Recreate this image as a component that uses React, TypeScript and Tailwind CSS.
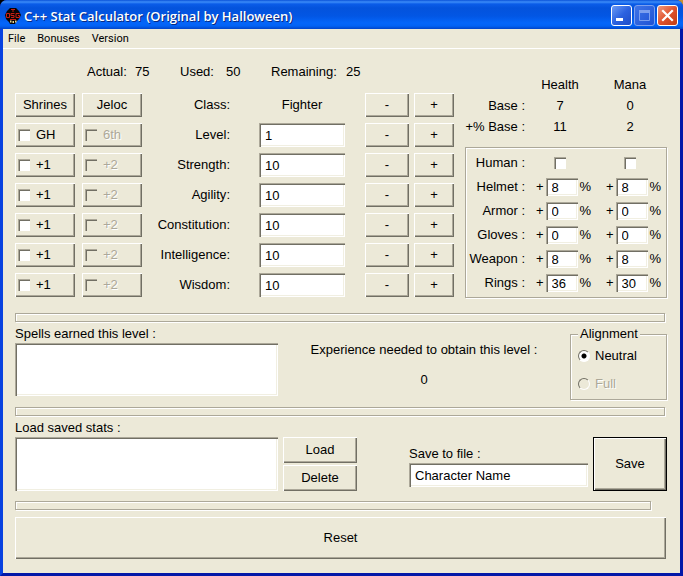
import type { ReactNode } from "react";

const raised =
  "bg-[#ece9d8] shadow-[inset_1px_1px_#ffffff,inset_-1px_-1px_#716f64,inset_-2px_-2px_#aca899]";
const sunken =
  "bg-white shadow-[inset_1px_1px_#aca899,inset_2px_2px_#716f64,inset_-1px_-1px_#ffffff,inset_-2px_-2px_#f1efe2]";
const tick =
  "size-3 shrink-0 appearance-none bg-white shadow-[inset_1px_1px_#aca899,inset_2px_2px_#716f64] checked:bg-[#716f64] disabled:bg-[#ece9d8]";
const etched = "border border-[#aca899] shadow-[1px_1px_#ffffff,inset_1px_1px_#ffffff]";

function PushButton({ children, label, className = "" }: { children: ReactNode; label?: string; className?: string }) {
  return (
    <button type="button" aria-label={label} className={`${raised} flex items-center justify-center ${className}`}>
      {children}
    </button>
  );
}

function TickButton({ text, disabled = false }: { text: string; disabled?: boolean }) {
  return (
    <label className={`${raised} flex h-6 w-[60px] items-center gap-1.5 pl-[3px]`}>
      <input type="checkbox" disabled={disabled} className={tick} />
      <span className={disabled ? "text-[#aca899] [text-shadow:1px_1px_#ffffff]" : ""}>{text}</span>
    </label>
  );
}

function Separator({ className = "mr-0.5" }: { className?: string }) {
  return <div role="separator" className={`${etched} h-[9px] ${className}`} />;
}

const stats = [
  { name: "Level", value: "1", first: "GH", second: "6th" },
  { name: "Strength", value: "10", first: "+1", second: "+2" },
  { name: "Agility", value: "10", first: "+1", second: "+2" },
  { name: "Constitution", value: "10", first: "+1", second: "+2" },
  { name: "Intelligence", value: "10", first: "+1", second: "+2" },
  { name: "Wisdom", value: "10", first: "+1", second: "+2" },
];

const gear = [
  { name: "Helmet", health: "8", mana: "8" },
  { name: "Armor", health: "0", mana: "0" },
  { name: "Gloves", health: "0", mana: "0" },
  { name: "Weapon", health: "8", mana: "8" },
  { name: "Rings", health: "36", mana: "30" },
];

function AppIcon() {
  return (
    <svg viewBox="0 0 16 16" className="size-4" aria-hidden="true">
      <path d="M5 0h6l3 3 2 4-2 4-3 3-1 2H5l-1-2-3-3-1-4 2-4z" fill="#0a0505" />
      <path
        d="M6 1.5h4M7 3h2M1.5 5.5h3M1.5 5.5v4h3v-4M6 5.5h3.5M6 5.5v2h3v2H6M11 5.5h3.5M11 5.5v4h3.5v-2h-1.500M5 11.500h6"
        fill="none"
        stroke="#c81e14"
        strokeWidth="1"
      />
      <path d="M5 12.500h1.500v2H5zM7.500 13H9v2H7.500zM10 12.500h1.500v2H10z" fill="#e8d890" />
    </svg>
  );
}

function TitleBar() {
  return (
    <header className="flex h-[29px] items-center gap-[3px] bg-[linear-gradient(#0a52d8_0,#3c8cf8_2px,#0a5ce8_4px,#0453dc_8px,#0256e4_16px,#0466fa_23px,#0262f4_26px,#0144c8_29px)] pt-0.5 pr-[5px] pl-[5px]">
      <AppIcon />
      <h1 className="flex-1 font-['Open_Sans',sans-serif] text-[13px] leading-4 font-semibold whitespace-nowrap text-white [text-shadow:1px_1px_#0a2a80]">
        C++ Stat Calculator (Original by Halloween)
      </h1>
      <div className="flex gap-0.5">
        <button
          type="button"
          aria-label="Minimize"
          className="size-[21px] rounded-[3px] border border-white bg-linear-to-br from-[#6c9af4] via-[#2c62e0] to-[#1e4cc8]"
        >
          <svg viewBox="0 0 19 19" aria-hidden="true">
            <path d="M4 12h7v3H4z" fill="#fff" />
          </svg>
        </button>
        <button
          type="button"
          aria-label="Maximize"
          disabled
          className="size-[21px] rounded-[3px] border border-[#7c9fee] bg-linear-to-br from-[#3f74e8] to-[#1f52d4]"
        >
          <svg viewBox="0 0 19 19" aria-hidden="true">
            <path d="M4.500 5.500h10v9h-10z" fill="none" stroke="#7c9fee" />
            <path d="M4 4h11v3H4z" fill="#7c9fee" />
          </svg>
        </button>
        <button
          type="button"
          aria-label="Close"
          className="size-[21px] rounded-[3px] border border-white bg-linear-to-br from-[#f0987c] via-[#e0522c] to-[#c03c14]"
        >
          <svg viewBox="0 0 19 19" aria-hidden="true">
            <path d="M5 5l9 9M14 5l-9 9" stroke="#fff" strokeWidth="2.200" strokeLinecap="square" />
          </svg>
        </button>
      </div>
    </header>
  );
}

function StatGrid() {
  return (
    <section className="w-[439px] pt-[15px]">
      <dl className="flex h-4 pl-[72px]">
        <dt className="w-12">Actual:</dt>
        <dd className="w-[45px]">75</dd>
        <dt className="w-[46px]">Used:</dt>
        <dd className="w-[45px]">50</dd>
        <dt className="w-[75px]">Remaining:</dt>
        <dd>25</dd>
      </dl>
      <div className="mt-[13px] grid grid-cols-[60px_7px_60px_88px_29px_86px_20px_44px_5px_40px] items-center gap-y-1.5">
        <PushButton className="h-6">Shrines</PushButton>
        <span />
        <PushButton className="h-6">Jeloc</PushButton>
        <span className="text-right">Class:</span>
        <span />
        <span className="text-center">Fighter</span>
        <span />
        <PushButton label="Previous class" className="h-6">-</PushButton>
        <span />
        <PushButton label="Next class" className="h-6">+</PushButton>
        {stats.map((s) => (
          <div key={s.name} className="contents">
            <TickButton text={s.first} />
            <span />
            <TickButton text={s.second} disabled />
            <label htmlFor={s.name} className="text-right">{s.name}:</label>
            <span />
            <input id={s.name} defaultValue={s.value} className={`${sunken} h-6 w-full px-1.5`} />
            <span />
            <PushButton label={`Decrease ${s.name}`} className="h-6">-</PushButton>
            <span />
            <PushButton label={`Increase ${s.name}`} className="h-6">+</PushButton>
          </div>
        ))}
      </div>
    </section>
  );
}

function PercentField({ id, value }: { id: string; value: string }) {
  return (
    <label className="flex items-center justify-center gap-0.5 pl-[7px]">
      +<input id={id} defaultValue={value} className={`${sunken} h-[18px] w-8 pl-1.5`} />%
    </label>
  );
}

function HealthMana() {
  return (
    <section className="w-[202px] pt-7">
      <div className="grid grid-cols-[60px_70px_70px] gap-y-[5px] text-center leading-4">
        <span />
        <span>Health</span>
        <span>Mana</span>
        <span className="text-right">Base :</span>
        <span>7</span>
        <span>0</span>
        <span className="text-right">+% Base :</span>
        <span>11</span>
        <span>2</span>
      </div>
      <div className={`${etched} mt-3 grid grid-cols-[59px_70px_70px] items-center pt-[3px] pb-0.5`}>
        <span className="flex h-6 items-center justify-end">Human :</span>
        <input type="checkbox" aria-label="Human health" className={`${tick} justify-self-center`} />
        <input type="checkbox" aria-label="Human mana" className={`${tick} justify-self-center`} />
        {gear.map((g) => (
          <div key={g.name} className="contents">
            <span className="flex h-6 items-center justify-end">{g.name} :</span>
            <PercentField id={`${g.name}-health`} value={g.health} />
            <PercentField id={`${g.name}-mana`} value={g.mana} />
          </div>
        ))}
      </div>
    </section>
  );
}

const radio =
  "size-3 appearance-none rounded-full border border-t-[#716f64] border-l-[#716f64] border-r-white border-b-white bg-white checked:bg-[radial-gradient(circle,#000000_2px,#ffffff_3px)] disabled:bg-[#ece9d8]";

export default function App() {
  return (
    <div className="bg-[linear-gradient(90deg,#000000_50%,#c89030_50%)]">
      <div className="flex min-h-screen flex-col overflow-hidden rounded-t-[7px] bg-[#0831d9] font-['Liberation_Sans',Arial,sans-serif] text-[13px] leading-4 text-black">
        <TitleBar />
        <div className="flex-1 border-x-[3px] border-b-[3px] border-r-[#0218a8] border-b-[#0218a8] border-l-[#0842e0] bg-[#ece9d8]">
          <nav className="flex h-5 items-center gap-3 border-b border-white pl-[5px] font-['Roboto',sans-serif] text-[11px] leading-4">
            <button type="button">File</button>
            <button type="button">Bonuses</button>
            <button type="button">Version</button>
          </nav>
          <main className="flex flex-col pr-[13px] pb-3.5 pl-3">
            <div className="flex justify-between pb-[15px]">
              <StatGrid />
              <HealthMana />
            </div>
            <Separator />
            <div className="flex items-start justify-between pt-1 pb-[7px]">
              <div className="w-[263px]">
                <label htmlFor="spells" className="block">Spells earned this level :</label>
                <textarea id="spells" className={`${sunken} mt-px block h-[53px] w-full resize-none p-1`} />
              </div>
              <div className="flex flex-col gap-3.5 pt-4 text-center">
                <span>Experience needed to obtain this level :</span>
                <output>0</output>
              </div>
              <fieldset className={`${etched} h-[74px] w-[97px] px-[7px]`}>
                <legend className="bg-[#ece9d8] px-0.5">Alignment</legend>
                <label className="mt-1.5 flex items-center gap-[5px]">
                  <input type="radio" name="alignment" defaultChecked className={radio} />
                  Neutral
                </label>
                <label className="mt-3 flex items-center gap-[5px] text-[#aca899] [text-shadow:1px_1px_#ffffff]">
                  <input type="radio" name="alignment" disabled className={radio} />
                  Full
                </label>
              </fieldset>
            </div>
            <Separator />
            <div className="flex items-end pt-1 pb-2.5">
              <div className="w-[263px]">
                <label htmlFor="saved" className="block">Load saved stats :</label>
                <textarea id="saved" className={`${sunken} mt-px block h-[54px] w-full resize-none p-1`} />
              </div>
              <div className="ml-[5px] flex w-[74px] flex-col gap-0.5">
                <PushButton className="h-[26px]">Load</PushButton>
                <PushButton className="h-[26px]">Delete</PushButton>
              </div>
              <div className="mr-[5px] ml-auto w-[179px] pb-1">
                <label htmlFor="file" className="block">Save to file :</label>
                <input id="file" defaultValue="Character Name" className={`${sunken} mt-px block h-6 w-full px-1.5`} />
              </div>
              <div className="w-[74px] border border-black">
                <PushButton className="h-[52px] w-full">Save</PushButton>
              </div>
            </div>
            <Separator className="mr-4" />
            <PushButton className="mt-[7px] mr-px h-[42px]">Reset</PushButton>
          </main>
        </div>
      </div>
    </div>
  );
}
